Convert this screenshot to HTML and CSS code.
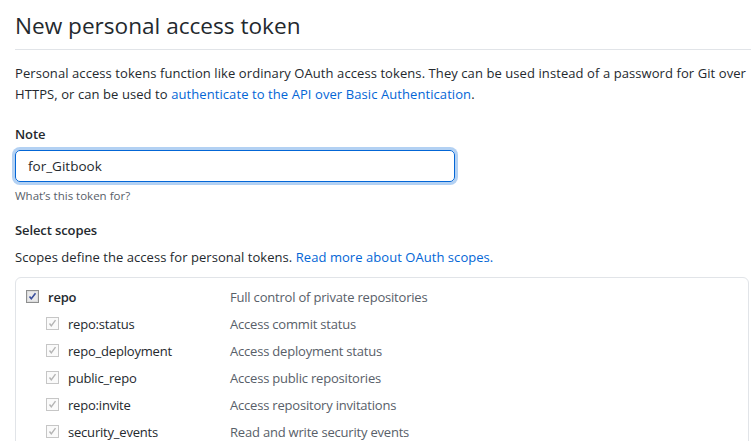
FILE: index.html
```html
<!DOCTYPE html>
<html>
<head>
<meta charset="utf-8">
<link rel="stylesheet" href="styles.css">
</head>
<body>
<div class="page">
  <h1 class="title">New personal access token</h1>
  <p class="intro">Personal access tokens function like ordinary OAuth access tokens. They can be used instead of a password for Git over<br>HTTPS, or can be used to <a href="#" class="link">authenticate to the API over Basic Authentication</a>.</p>

  <div class="field note">
    <label class="label">Note</label>
    <div class="input">for_Gitbook</div>
    <p class="hint">What’s this token for?</p>
  </div>

  <div class="field select">
    <div class="label">Select scopes</div>
    <p class="scopes-desc">Scopes define the access for personal tokens. <a href="#" class="link">Read more about OAuth scopes.</a></p>
  </div>

  <div class="scopes">
    <div class="row parent">
      <span class="name"><span class="cb cb-on"><svg viewBox="0 0 13 13" width="13" height="13"><rect x="0.5" y="0.5" width="12" height="12" fill="#f4f4f4" stroke="#8e8f8f"/><rect x="1.5" y="1.5" width="10" height="10" fill="#e9e9ea" stroke="#dcdcdc"/><path d="M3.5 6.5 L5.3 8.8 L9.5 3.2" fill="none" stroke="#3a4f9c" stroke-width="1.6"/></svg></span>repo</span>
      <span class="desc">Full control of private repositories</span>
    </div>
    <div class="row child">
      <span class="name"><span class="cb"><svg viewBox="0 0 13 13" width="13" height="13"><rect x="0.5" y="0.5" width="12" height="12" fill="#fafafa" stroke="#c6c6c6"/><path d="M3.5 6.5 L5.3 8.8 L9.5 3.2" fill="none" stroke="#b4b4b4" stroke-width="1.4"/></svg></span>repo:status</span>
      <span class="desc">Access commit status</span>
    </div>
    <div class="row child">
      <span class="name"><span class="cb"><svg viewBox="0 0 13 13" width="13" height="13"><rect x="0.5" y="0.5" width="12" height="12" fill="#fafafa" stroke="#c6c6c6"/><path d="M3.5 6.5 L5.3 8.8 L9.5 3.2" fill="none" stroke="#b4b4b4" stroke-width="1.4"/></svg></span>repo_deployment</span>
      <span class="desc">Access deployment status</span>
    </div>
    <div class="row child">
      <span class="name"><span class="cb"><svg viewBox="0 0 13 13" width="13" height="13"><rect x="0.5" y="0.5" width="12" height="12" fill="#fafafa" stroke="#c6c6c6"/><path d="M3.5 6.5 L5.3 8.8 L9.5 3.2" fill="none" stroke="#b4b4b4" stroke-width="1.4"/></svg></span>public_repo</span>
      <span class="desc">Access public repositories</span>
    </div>
    <div class="row child">
      <span class="name"><span class="cb"><svg viewBox="0 0 13 13" width="13" height="13"><rect x="0.5" y="0.5" width="12" height="12" fill="#fafafa" stroke="#c6c6c6"/><path d="M3.5 6.5 L5.3 8.8 L9.5 3.2" fill="none" stroke="#b4b4b4" stroke-width="1.4"/></svg></span>repo:invite</span>
      <span class="desc">Access repository invitations</span>
    </div>
    <div class="row child">
      <span class="name"><span class="cb"><svg viewBox="0 0 13 13" width="13" height="13"><rect x="0.5" y="0.5" width="12" height="12" fill="#fafafa" stroke="#c6c6c6"/><path d="M3.5 6.5 L5.3 8.8 L9.5 3.2" fill="none" stroke="#b4b4b4" stroke-width="1.4"/></svg></span>security_events</span>
      <span class="desc">Read and write security events</span>
    </div>
  </div>
</div>
</body>
</html>
```
FILE: styles.css
```css
* { box-sizing: border-box; }
body {
  margin: 0;
  background: #fff;
  font-family: "Open Sans", "Noto Sans", sans-serif;
  color: #24292e;
  overflow: hidden;
}
.page {
  padding: 0 0 0 15px;
}
.title {
  margin: 0;
  padding: 10px 0 7px;
  font-size: 22.6px;
  font-weight: 400;
  line-height: 32px;
  border-bottom: 1px solid #e1e4e8;
}
.intro {
  margin: 13px 0 0;
  font-size: 13px;
  line-height: 21px;
  letter-spacing: 0.08px;
}
.link { color: #0366d6; text-decoration: none; }
.field.note { margin-top: 19px; }
.field.select { margin-top: 15px; }
.label {
  display: block;
  font-size: 13px;
  font-weight: 600;
  line-height: 20px;
  letter-spacing: -0.1px;
}
.input {
  margin-top: 6px;
  width: 440px;
  height: 32px;
  padding: 0 12px;
  font-size: 13.5px;
  line-height: 30px;
  border: 1px solid #0366d6;
  border-radius: 5px;
  box-shadow: 0 0 0 3px rgba(3, 102, 214, 0.3);
}
.hint {
  margin: 5px 0 0;
  font-size: 11.5px;
  line-height: 18px;
  color: #586069;
}
.scopes-desc {
  margin: 6px 0 0;
  font-size: 13px;
  line-height: 22px;
  letter-spacing: 0.05px;
}
.scopes {
  margin-top: 9px;
  margin-right: 2px;
  border: 1px solid #e1e4e8;
  border-radius: 6px;
  padding: 5px 0 0 10px;
  height: 200px;
}
.row {
  display: flex;
  align-items: center;
  height: 27px;
  font-size: 13px;
  letter-spacing: -0.2px;
}
.name {
  display: flex;
  align-items: center;
  width: 204px;
}
.child .name { padding-left: 20px; }
.cb {
  display: inline-flex;
  width: 13px;
  height: 13px;
  margin-right: 9px;
}
.parent .name { font-weight: 600; }
.desc { color: #586069; }
```
